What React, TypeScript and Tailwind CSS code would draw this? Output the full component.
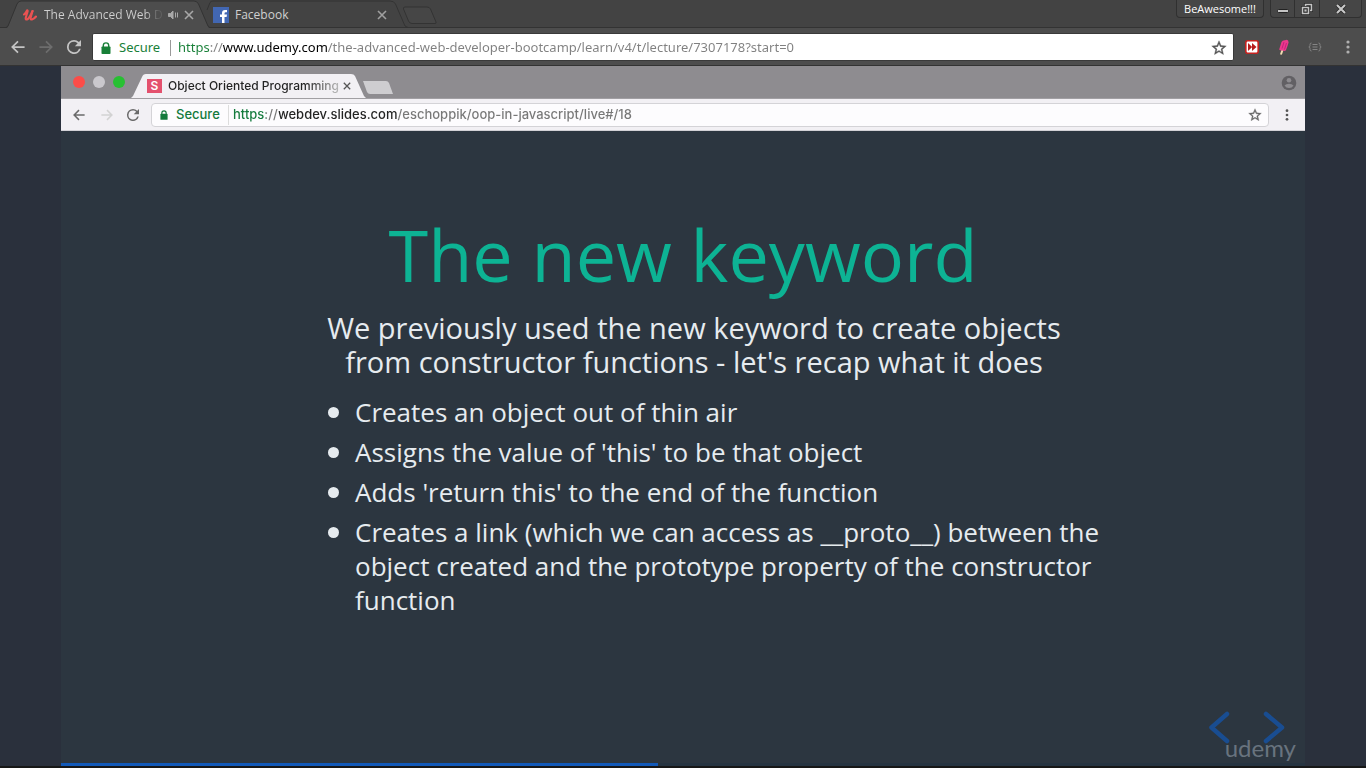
import type { ReactNode } from "react";

function Star({ className }: { className: string }) {
  return (
    <svg viewBox="1 1 22 22" className={className} fill="currentColor" stroke="currentColor" strokeWidth="0.5" aria-hidden="true">
      <path d="M22 9.24l-7.19-.62L12 2 9.19 8.63 2 9.24l5.46 4.73L5.82 21 12 17.27 18.18 21l-1.63-7.03L22 9.24zM12 15.4l-3.76 2.27 1-4.28-3.32-2.88 4.38-.38L12 6.1l1.71 4.04 4.38.38-3.32 2.88 1 4.28L12 15.4z" />
    </svg>
  );
}

function Arrow({ className }: { className: string }) {
  return (
    <svg viewBox="0 0 16 16" className={className} fill="none" stroke="currentColor" strokeWidth="2" aria-hidden="true">
      <path d="M15.500 8H2M8 1.500L1.500 8L8 14.500" />
    </svg>
  );
}

function Reload({ className }: { className: string }) {
  return (
    <svg viewBox="4 4 16 16" className={className} fill="currentColor" aria-hidden="true">
      <path d="M17.65 6.35A7.96 7.96 0 0 0 12 4a8 8 0 1 0 7.73 10h-2.08A6 6 0 1 1 12 6c1.66 0 3.14.69 4.22 1.78L13 11h7V4l-2.35 2.35z" />
    </svg>
  );
}

function Lock({ className }: { className: string }) {
  return (
    <svg viewBox="0 0 10 12" className={className} aria-hidden="true">
      <path d="M2.3 5V3.6a2.7 2.7 0 0 1 5.4 0V5" fill="none" stroke="currentColor" strokeWidth="1.4" />
      <rect x="0.5" y="4.5" width="9" height="7.5" rx="0.8" fill="currentColor" />
    </svg>
  );
}

function Dots({ className }: { className: string }) {
  return (
    <svg viewBox="0 0 4 14" className={className} fill="currentColor" aria-hidden="true">
      <circle cx="2" cy="2" r="1.6" />
      <circle cx="2" cy="7" r="1.6" />
      <circle cx="2" cy="12" r="1.6" />
    </svg>
  );
}

function Cross({ className }: { className: string }) {
  return (
    <svg viewBox="0 0 10 10" className={className} fill="none" stroke="currentColor" strokeWidth="1.6" aria-hidden="true">
      <path d="M1 1l8 8M9 1L1 9" />
    </svg>
  );
}

function IconButton({ label, className, children }: { label: string; className: string; children: ReactNode }) {
  return (
    <button type="button" aria-label={label} className={`flex shrink-0 items-center justify-center ${className}`}>
      {children}
    </button>
  );
}

function WindowTabs() {
  return (
    <header className="flex h-7 items-start bg-[#434343] text-xs text-[#d0d0d0] shadow-[inset_0_-1px_0_#333333]">
      <div className="relative ml-1.5 flex h-7 w-[204px] items-center pl-4 pr-3 pt-0.5">
        <svg viewBox="0 0 204 28" className="absolute inset-0 h-7 w-full" aria-hidden="true">
          <path d="M0 28.5L2 27L11 4Q12.500 1 15 1H188Q191 1 192.500 4L202 27L204 28.500Z" fill="#4d4d4d" />
          <path d="M0 27.500L2 26L11 4Q12.500 1 15 1H188Q191 1 192.500 4L202 26L204 27.500" fill="none" stroke="#333333" />
        </svg>
        <svg viewBox="0 0 14 12" className="relative ml-px h-3 w-3.5 shrink-0" fill="none" stroke="#ea5252" strokeLinecap="round" strokeLinejoin="round" aria-hidden="true">
          <path d="M1 5.500Q3 4 4 1.500Q4.800 1 4.600 2.500L2.800 8.500Q2.300 10.800 4 10.500Q6.200 9.800 9.500 2" strokeWidth="2.100" />
          <path d="M9.500 2L7.700 8.500Q7.200 10.800 9 10.500Q11 10 13 7.500" strokeWidth="2.100" />
        </svg>
        <span className="relative ml-[7px] w-[120px] whitespace-nowrap bg-linear-to-r from-[#d0d0d0] from-85% to-[#606060] to-95% bg-clip-text text-transparent">
          The Advanced Web D
        </span>
        <IconButton label="Mute tab" className="relative ml-1">
          <svg viewBox="0 0 12 10" className="h-2.5 w-3" fill="none" stroke="#a8a8a8" aria-hidden="true">
            <path d="M0.500 3.500H2.500L5 1V9L2.500 6.500H0.500Z" fill="#a8a8a8" />
            <path d="M7.500 2.500V7.500M9.500 2.500V7.500" />
          </svg>
        </IconButton>
        <IconButton label="Close tab" className="relative ml-1 text-[#a8a8a8]">
          <Cross className="size-2.5" />
        </IconButton>
      </div>
      <div className="relative -ml-1 flex h-7 w-[204px] items-center pl-[7px] pr-[23px] pt-0.5">
        <svg viewBox="0 0 204 28" className="absolute inset-0 h-7 w-full" fill="none" stroke="#333333" aria-hidden="true">
          <path d="M1 10L4 2.500Q5 1 7 1H184Q188 1 189.500 4L199 26L202 27.500" />
        </svg>
        <svg viewBox="0 0 16 16" className="relative size-4 shrink-0" aria-hidden="true">
          <rect width="16" height="16" fill="#4267b2" />
          <path d="M9 16V10H7V7.500H9V6Q9 3 12 3H14V5.300H12.800Q11.500 5.300 11.500 6.500V7.500H14L13.600 10H11.500V16Z" fill="#fff" />
        </svg>
        <span className="relative ml-1.5 grow">Facebook</span>
        <IconButton label="Close tab" className="relative text-[#a0a0a0]">
          <Cross className="size-2.5" />
        </IconButton>
      </div>
      <IconButton label="New tab" className="-ml-2 mt-1.5">
        <svg viewBox="0 0 36 19" className="h-[19px] w-9" fill="#464646" stroke="#333333" aria-hidden="true">
          <path d="M3 1H25Q27.500 1 28.500 3L34 16Q34.500 17.500 33 17.500H10Q7.500 17.500 6.500 15L1.500 3Q1 1 3 1Z" />
        </svg>
      </IconButton>
      <div className="ml-auto mr-1 flex items-start gap-1.5 text-[#c4c4c4]">
        <button type="button" className="h-[18px] w-[88px] rounded-b border border-t-0 border-[#303030] bg-[#464646] text-center text-[11px] leading-[18px] text-white">
          BeAwesome!!!
        </button>
        <div className="flex h-[18px] w-[92px] divide-x divide-[#303030] rounded-b border border-t-0 border-[#303030] bg-[#464646]">
          <IconButton label="Minimize" className="w-6">
            <svg viewBox="0 0 12 4" className="mt-1 h-1 w-3" aria-hidden="true"><rect x="0.500" y="0.500" width="11" height="3" rx="1" fill="#c4c4c4" stroke="#222222" /></svg>
          </IconButton>
          <IconButton label="Restore" className="w-[25px]">
            <svg viewBox="0 0 12 12" className="size-3" fill="none" aria-hidden="true">
              <path d="M4.500 3V1.500H10.500V7.500H9M1.500 4.500H7.500V10.500H1.500Z" stroke="#222222" strokeWidth="3" />
              <path d="M4.500 3V1.500H10.500V7.500H9M1.500 4.500H7.500V10.500H1.500Z" stroke="#c4c4c4" strokeWidth="1.600" />
              <rect x="3.500" y="6.500" width="2" height="2" fill="#c4c4c4" />
            </svg>
          </IconButton>
          <IconButton label="Close" className="grow">
            <svg viewBox="0 0 12 10" className="h-2.5 w-3" fill="none" aria-hidden="true">
              <path d="M2 1L10 9M10 1L2 9" stroke="#222222" strokeWidth="3.600" />
              <path d="M2 1L10 9M10 1L2 9" stroke="#c8c8c8" strokeWidth="2.200" />
            </svg>
          </IconButton>
        </div>
      </div>
    </header>
  );
}

function WindowToolbar() {
  return (
    <div className="flex h-[38px] items-center border-b border-[#333333] bg-[#4d4d4d] pl-2.5 pr-4 text-[#c4c4c4]">
      <IconButton label="Back" className="size-4"><Arrow className="h-3.5 w-3.5" /></IconButton>
      <IconButton label="Forward" className="ml-3 size-4 text-[#6d6d6d]"><Arrow className="h-3.5 w-3.5 rotate-180" /></IconButton>
      <IconButton label="Reload" className="ml-3 size-4"><Reload className="size-3.5" /></IconButton>
      <div className="ml-2.5 flex h-7 min-w-0 grow items-center rounded-xs border border-[#3a3a3a] bg-white pl-2 pr-1.5 pt-0.5 font-['Noto_Sans','Open_Sans',sans-serif] text-[13px]">
        <Lock className="h-3 w-2.5 shrink-0 text-[#188038]" />
        <label htmlFor="window-address" className="ml-2 w-[42px] shrink-0 text-[#188038]">Secure</label>
        <span className="ml-[9px] h-4 w-px shrink-0 bg-[#9a9a9a]" />
        <input
          id="window-address"
          type="text"
          defaultValue="https://www.udemy.com/the-advanced-web-developer-bootcamp/learn/v4/t/lecture/7307178?start=0"
          className="ml-[7px] min-w-0 grow bg-[linear-gradient(90deg,#188038_32px,#808080_32px,#808080_45px,#000000_45px,#000000_150px,#808080_150px)] bg-clip-text text-transparent outline-none"
        />
        <IconButton label="Bookmark" className="text-[#555555]"><Star className="size-4" /></IconButton>
      </div>
      <IconButton label="Playback speed extension" className="ml-[11px]">
        <svg viewBox="0 0 14 14" className="size-3.5" aria-hidden="true">
          <rect x="0.800" y="0.800" width="12.400" height="12.400" rx="2" fill="#fff" stroke="#c5221f" strokeWidth="1.600" />
          <path d="M3 3L7.200 7L3 11ZM7 3L11.500 7L7 11Z" fill="#b71c1c" />
        </svg>
      </IconButton>
      <IconButton label="Popsicle extension" className="ml-[18px]">
        <svg viewBox="0 0 14 16" className="h-4 w-3.5" aria-hidden="true">
          <path d="M5.500 11L4.200 14.800" stroke="#f3dcb0" strokeWidth="2" strokeLinecap="round" />
          <path d="M2.200 10.500L4.500 3Q5.500 1 8 1.200Q11.500 -0.500 11.600 3.500L10.500 7L9 11Q8 12.500 7 11.700L3 11.300Z" fill="#ec3a8b" />
          <path d="M7 3L5 9.500M9.500 4L7.500 10.500" stroke="#c61d80" />
        </svg>
      </IconButton>
      <IconButton label="Code extension" className="ml-4 w-4 text-[#858585]">
        <svg viewBox="0 0 14 10" className="h-2.5 w-3.5" fill="none" stroke="currentColor" aria-hidden="true">
          <path d="M3.500 1Q2 1 2 2.500V3.500Q2 5 0.800 5Q2 5 2 6.500V7.500Q2 9 3.500 9M10.500 1Q12 1 12 2.500V3.500Q12 5 13.200 5Q12 5 12 6.500V7.500Q12 9 10.500 9M4.500 2.500H9.500M4.500 5H9.500M4.500 7.500H9.500" />
        </svg>
      </IconButton>
      <IconButton label="Menu" className="ml-[23px] text-[#b0b0b0]"><Dots className="h-3.5 w-1" /></IconButton>
    </div>
  );
}

function SlideBrowser() {
  return (
    <div className="font-['Inter','Liberation_Sans',sans-serif]">
      <div className="flex h-[33px] items-end border-b border-[#a19fa3] bg-[#8e8c90] pl-3 pr-2">
        <div className="flex h-8 items-center gap-2">
          <span className="size-3 rounded-full bg-[#fc4c48]" />
          <span className="size-3 rounded-full bg-[#cac8cd]" />
          <span className="size-3 rounded-full bg-[#27c032]" />
        </div>
        <div className="relative ml-1.5 flex h-6 w-[235px] items-center pl-4 pr-[17px]">
          <svg viewBox="0 0 235 24" preserveAspectRatio="none" className="absolute inset-0 size-full" aria-hidden="true">
            <path d="M0 24L2 22L11 3Q12 0 15 0H220Q223 0 224 2L233 22L235 24Z" fill="#f2f0f4" />
          </svg>
          <span className="relative flex h-3.5 w-[15px] shrink-0 items-center justify-center bg-[#e4516e] text-[12px] font-semibold leading-none text-white">S</span>
          <span className="relative ml-1.5 grow whitespace-nowrap bg-linear-to-r from-[#222222] from-80% to-[#bbbbbb] bg-clip-text text-[12px] font-medium text-transparent">
            Object Oriented Programming
          </span>
          <IconButton label="Close slide tab" className="relative ml-1 text-[#555555]"><Cross className="size-2" /></IconButton>
        </div>
        <IconButton label="New slide tab" className="-ml-1 mb-1">
          <svg viewBox="0 0 32 13" className="h-[13px] w-8" fill="#cecdd0" aria-hidden="true"><path d="M1 0H24Q26 0 27 2L31 13H8Q6 13 5 11Z" /></svg>
        </IconButton>
        <IconButton label="Profile" className="mb-[7px] ml-auto">
          <svg viewBox="0 0 16 16" className="size-4" aria-hidden="true">
            <circle cx="8" cy="8" r="7.300" fill="#626064" />
            <circle cx="8" cy="5.300" r="2.300" fill="#8e8c90" />
            <path d="M3.500 10.500Q5 8.700 8 8.700T12.500 10.500Q11 13 8 13T3.500 10.500Z" fill="#8e8c90" />
          </svg>
        </IconButton>
      </div>
      <div className="flex h-8 items-center bg-[#f2f0f4] pl-2.5 pr-4 text-[#6a6a6a] shadow-[inset_0_-1px_0_#d2d1d6]">
        <IconButton label="Slide back" className="size-4"><Arrow className="h-3 w-3.5" /></IconButton>
        <IconButton label="Slide forward" className="ml-3 size-4 text-[#d2d2d2]"><Arrow className="h-3 w-3.5 rotate-180" /></IconButton>
        <IconButton label="Reload slides" className="ml-2.5 size-4"><Reload className="h-3 w-3.5" /></IconButton>
        <div className="ml-2.5 flex h-6 min-w-0 grow items-center rounded-sm border border-[#d4d3d7] bg-[#fdfcfe] pl-2 pr-1.5 text-[13px] font-medium">
          <Lock className="h-2.5 w-2 shrink-0 text-[#137a3c]" />
          <label htmlFor="slide-address" className="ml-2 w-11 shrink-0 text-[#137a3c]">Secure</label>
          <span className="ml-2 h-5 w-px shrink-0 bg-[#dddddd]" />
          <input
            id="slide-address"
            type="text"
            defaultValue="https://webdev.slides.com/eschoppik/oop-in-javascript/live#/18"
            className="ml-1 min-w-0 grow bg-[linear-gradient(90deg,#137a3c_33px,#777777_33px,#777777_46px,#222222_46px,#222222_165px,#777777_165px)] bg-clip-text text-transparent outline-none"
          />
          <IconButton label="Bookmark slides" className="text-[#666666]"><Star className="size-3.5" /></IconButton>
        </div>
        <IconButton label="Slide menu" className="ml-4 text-[#555555]"><Dots className="h-3 w-1" /></IconButton>
      </div>
    </div>
  );
}

const points = [
  "Creates an object out of thin air",
  "Assigns the value of 'this' to be that object",
  "Adds 'return this' to the end of the function",
  "Creates a link (which we can access as __proto__) between the object created and the prototype property of the constructor function",
];

function Slide() {
  return (
    <section className="flex grow flex-col items-center pt-[81px] text-[#e6ebef]">
      <h1 className="text-center text-[72px] leading-[84px] text-[#0db394]">The new keyword</h1>
      <p className="mt-[15px] pl-[22px] text-center text-[29px] leading-[34px]">
        We previously used the new keyword to create objects
        <br />
        from constructor functions - let's recap what it does
      </p>
      <ul className="mt-4 flex w-[834px] flex-col gap-1.5 pl-[62px] text-[26px] leading-[34px]">
        {points.map((point) => (
          <li key={point} className="flex">
            <span className="mr-4 mt-3 size-[11px] shrink-0 rounded-full bg-[#e6ebef]" />
            <span>{point}</span>
          </li>
        ))}
      </ul>
    </section>
  );
}

export default function App() {
  return (
    <div className="flex min-h-screen flex-col bg-[#2a303c] font-['Open_Sans','Noto_Sans',sans-serif]">
      <WindowTabs />
      <WindowToolbar />
      <main className="flex grow flex-col px-[61px]">
        <div className="relative flex grow flex-col bg-[#2c3640]">
          <SlideBrowser />
          <Slide />
          <div className="absolute bottom-1 right-2 h-[52px] w-[90px]">
            <svg viewBox="0 0 90 52" className="absolute inset-0 size-full" fill="none" stroke="#194d91" strokeWidth="4.500" strokeLinecap="round" strokeLinejoin="round" aria-hidden="true">
              <path d="M20 4L4.500 17.500L20 31M59 4L75 17.500L59 31" />
            </svg>
            <span className="absolute bottom-0 right-px font-['Lato',sans-serif] text-[24px] leading-7 text-[#68737e]">udemy</span>
          </div>
          <div role="progressbar" aria-label="Lecture progress" aria-valuenow={48} aria-valuemin={0} aria-valuemax={100} className="absolute inset-x-0 bottom-0 h-[3px] bg-[#263441]">
            <div className="h-full w-[48%] bg-[#1259b8]" />
          </div>
        </div>
      </main>
      <footer className="h-0.5 bg-[#171717]" />
    </div>
  );
}
